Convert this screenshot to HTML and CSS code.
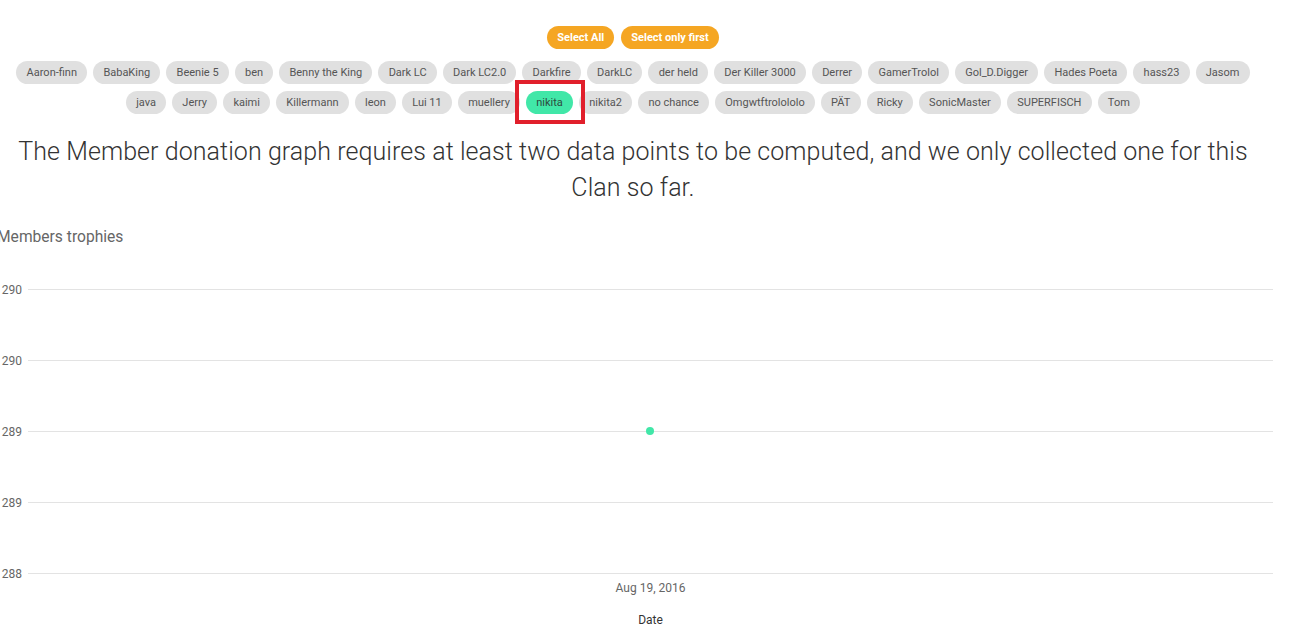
FILE: index.html
```html
<!DOCTYPE html>
<html>
<head>
<meta charset="utf-8">
<link rel="stylesheet" href="styles.css">
</head>
<body>
<div class="page">
  <div class="actions">
    <button class="btn">Select All</button>
    <button class="btn">Select only first</button>
  </div>
  <div class="chips">
    <span class="chip">Aaron-finn</span>
    <span class="chip">BabaKing</span>
    <span class="chip">Beenie 5</span>
    <span class="chip">ben</span>
    <span class="chip">Benny the King</span>
    <span class="chip">Dark LC</span>
    <span class="chip">Dark LC2.0</span>
    <span class="chip">Darkfire</span>
    <span class="chip">DarkLC</span>
    <span class="chip">der held</span>
    <span class="chip">Der Killer 3000</span>
    <span class="chip">Derrer</span>
    <span class="chip">GamerTrolol</span>
    <span class="chip">Gol_D.Digger</span>
    <span class="chip">Hades Poeta</span>
    <span class="chip">hass23</span>
    <span class="chip">Jasom</span>
    <span class="chip">java</span>
    <span class="chip">Jerry</span>
    <span class="chip">kaimi</span>
    <span class="chip">Killermann</span>
    <span class="chip">leon</span>
    <span class="chip">Lui 11</span>
    <span class="chip">muellery</span>
    <span class="chip chip-active">nikita</span>
    <span class="chip">nikita2</span>
    <span class="chip">no chance</span>
    <span class="chip">Omgwtftrolololo</span>
    <span class="chip">PÄT</span>
    <span class="chip">Ricky</span>
    <span class="chip">SonicMaster</span>
    <span class="chip">SUPERFISCH</span>
    <span class="chip">Tom</span>
  </div>
  <p class="notice">The Member donation graph requires at least two data points to be computed, and we only collected one for this Clan so far.</p>
  <div class="chart">
    <div class="chart-title">Members trophies</div>
    <div class="plot">
      <div class="grid-row"><span class="y-label">1290</span><span class="grid-line"></span></div>
      <div class="grid-row"><span class="y-label">1290</span><span class="grid-line"></span></div>
      <div class="grid-row"><span class="y-label">1289</span><span class="grid-line"></span></div>
      <div class="grid-row"><span class="y-label">1289</span><span class="grid-line"></span></div>
      <div class="grid-row"><span class="y-label">1288</span><span class="grid-line"></span></div>
      <span class="dot"></span>
    </div>
    <div class="x-axis">
      <div class="x-tick">Aug 19, 2016</div>
      <div class="x-title">Date</div>
    </div>
  </div>
</div>
<div class="highlight"></div>
</body>
</html>
```
FILE: styles.css
```css
html, body {
  margin: 0;
  padding: 0;
  background: #ffffff;
}
body {
  font-family: Roboto, "Liberation Sans", sans-serif;
  position: relative;
  overflow: hidden;
}
.page {
  width: 1266px;
  display: flex;
  flex-direction: column;
  align-items: center;
}
.actions {
  display: flex;
  gap: 7px;
  padding-top: 26px;
}
.btn {
  border: none;
  background: #f5a623;
  color: #ffffff;
  font-family: Roboto, "Liberation Sans", sans-serif;
  font-weight: 700;
  font-size: 11px;
  height: 23px;
  padding: 0 10px;
  border-radius: 12px;
  line-height: 23px;
}
.chips {
  display: flex;
  flex-wrap: wrap;
  justify-content: center;
  gap: 7px 6px;
  margin-top: 12px;
  width: 1266px;
}
.chip {
  display: inline-block;
  height: 23px;
  line-height: 23px;
  padding: 0 10.2px;
  border-radius: 12px;
  background: #e0e0e0;
  color: #555555;
  font-size: 11px;
  white-space: nowrap;
}
.chip-active {
  background: #41e7a8;
  color: #2f4a3f;
}
.notice {
  margin: 20px 0 0 0;
  font-size: 25px;
  font-weight: 300;
  letter-spacing: 0.07px;
  line-height: 36px;
  color: #333333;
  text-align: center;
  width: 1266px;
}
.chart {
  align-self: flex-start;
  width: 1273px;
}
.chart-title {
  margin: 22px 0 0 -3px;
  font-size: 15.6px;
  line-height: 18px;
  color: #666666;
}
.plot {
  position: relative;
  margin-top: 43px;
  display: flex;
  flex-direction: column;
  gap: 70px;
}
.grid-row {
  display: flex;
  align-items: center;
  height: 1px;
}
.y-label {
  width: 22px;
  flex-shrink: 0;
  display: flex;
  justify-content: flex-end;
  font-size: 12px;
  color: #666666;
  white-space: nowrap;
}
.grid-line {
  flex: 1;
  height: 1px;
  margin-left: 6px;
  background: #e3e3e3;
}
.dot {
  position: absolute;
  left: 646px;
  top: 138px;
  width: 8px;
  height: 8px;
  border-radius: 50%;
  background: #41e7a8;
}
.x-axis {
  margin-left: 28px;
  text-align: center;
  font-size: 12px;
  line-height: 14px;
}
.x-tick {
  margin-top: 7px;
  color: #666666;
}
.x-title {
  margin-top: 18px;
  color: #333333;
}
.highlight {
  position: absolute;
  left: 515px;
  top: 80px;
  width: 70px;
  height: 44px;
  box-sizing: border-box;
  border: 4px solid #e11f2b;
}
```
